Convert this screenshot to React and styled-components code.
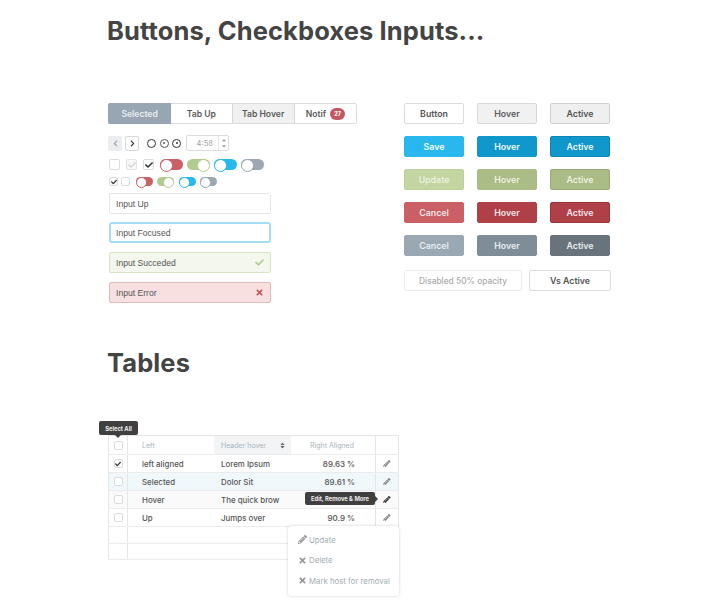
import React from "react";
import styled, { createGlobalStyle, css } from "styled-components";
import { FaPencilAlt, FaTimes, FaCheck, FaSort, FaChevronLeft, FaChevronRight, FaCaretUp, FaCaretDown } from "react-icons/fa";

const Global = createGlobalStyle`
  html, body { margin: 0; padding: 0; background: #fff; }
  body { font-family: "Inter", "Open Sans", sans-serif; color: #444; }
  * { box-sizing: border-box; }
`;

const Page = styled.div`
  width: 720px;
  height: 616px;
  padding: 14px 0 0 108px;
  overflow: hidden;
`;
const Title = styled.h1`
  margin: 0 0 0 -1px;
  font: 700 25.5px/34px "Inter", sans-serif;
  letter-spacing: 0.1px;
  color: #444;
`;
const Columns = styled.div`
  display: flex;
  margin-top: 55px;
  height: 243px;
`;
const Left = styled.div`
  width: 296px;
  display: flex;
  flex-direction: column;
`;
const Right = styled.div`
  display: flex;
  flex-direction: column;
  gap: 12px;
`;
const Tabs = styled.div`
  width: 249px;
  height: 21px;
  display: flex;
  border: 1px solid #dcdcdc;
  border-radius: 2px;
`;
const Tab = styled.div`
  flex: ${p => p.$w} 0 0;
  display: flex;
  align-items: center;
  justify-content: center;
  gap: 4px;
  font-size: 8.6px;
  font-weight: 600;
  color: #5a5a5a;
  ${p => p.$selected && css`background: #98a6b3; color: #e9edf0; margin: -1px 0 -1px -1px; border-radius: 2px 0 0 2px;`}
  ${p => p.$hover && css`background: #f1f1f1; border-left: 1px solid #d6d6d6; border-right: 1px solid #d6d6d6;`}
`;
const Badge = styled.span`
  width: 15px;
  height: 12px;
  border-radius: 6px;
  background: #c8565e;
  color: #fff;
  font-size: 5.5px;
  font-weight: 800;
  display: flex;
  align-items: center;
  justify-content: center;
`;
const Pager = styled.div`
  display: flex;
  align-items: center;
  height: 16px;
  margin-top: 11px;
`;
const PageBtn = styled.div`
  width: 14px;
  height: 15px;
  margin-right: 3px;
  border-radius: 2px;
  display: flex;
  align-items: center;
  justify-content: center;
  font-size: 7px;
  color: ${p => p.$off ? "#95a3b0" : "#333"};
  background: ${p => p.$off ? "#ebedef" : "#fff"};
  border: 1px solid ${p => p.$off ? "#ebedef" : "#d8d8d8"};
`;
const Radios = styled.div`
  display: flex;
  gap: 3.5px;
  margin: 0 5px 0 5px;
`;
const Radio = styled.span`
  width: 9px;
  height: 9px;
  border-radius: 50%;
  border: 1.5px solid ${p => p.$c};
  display: flex;
  align-items: center;
  justify-content: center;
  &::after {
    content: "";
    display: ${p => p.$dot ? "block" : "none"};
    width: 2px;
    height: 2px;
    border-radius: 50%;
    background: ${p => p.$c};
  }
`;
const Spinner = styled.div`
  width: 43px;
  height: 16px;
  display: flex;
  border: 1px solid #dcdcdc;
  border-radius: 2px;
`;
const SpinValue = styled.div`
  flex: 1;
  font-size: 7.6px;
  color: #a5a5a5;
  display: flex;
  align-items: center;
  justify-content: flex-end;
  padding-right: 5px;
`;
const SpinArrows = styled.div`
  width: 10px;
  border-left: 1px solid #e4e4e4;
  display: flex;
  flex-direction: column;
  align-items: center;
  justify-content: center;
  font-size: 6px;
  line-height: 6px;
  color: #999;
`;
const ControlRow = styled.div`
  display: flex;
  align-items: center;
  height: ${p => p.$h}px;
  margin: ${p => p.$mt}px 0 0 1px;
`;
const Box = styled.span`
  flex: none;
  width: ${p => p.$s}px;
  height: ${p => p.$s}px;
  margin-right: ${p => p.$mr}px;
  border: 1px solid ${p => p.$off ? "#e4e4e4" : "#dcdcdc"};
  border-radius: 2px;
  background: ${p => p.$off ? "#f8f8f8" : "#fff"};
  color: ${p => p.$off ? "#d6d6d6" : "#333"};
  display: flex;
  align-items: center;
  justify-content: center;
  font-size: ${p => p.$s - 3}px;
`;
const Toggle = styled.span`
  flex: none;
  width: ${p => p.$w}px;
  height: ${p => p.$h}px;
  margin-right: ${p => p.$mr}px;
  border-radius: ${p => p.$h / 2}px;
  background: ${p => p.$c};
  display: flex;
  justify-content: ${p => p.$right ? "flex-end" : "flex-start"};
  &::after {
    content: "";
    width: ${p => p.$h}px;
    height: ${p => p.$h}px;
    border-radius: 50%;
    background: #fff;
    border: 1px solid ${p => p.$c};
  }
`;
const Input = styled.div`
  width: 162px;
  height: 21px;
  margin: ${p => p.$mt}px 0 0 1px;
  padding: 0 6px;
  display: flex;
  align-items: center;
  justify-content: space-between;
  border-radius: 2px;
  font: 400 8.6px "Liberation Sans", Arial, sans-serif;
  color: #555;
  border: 1px solid #e6e6e6;
  ${p => p.$state === "focus" && css`border: 2px solid #a3def5; border-radius: 3px; padding: 0 5px;`}
  ${p => p.$state === "ok" && css`border-color: #d6e3c4; background: #f3f7ed; svg { color: #b6cd9a; }`}
  ${p => p.$state === "err" && css`border-color: #e5b8bb; background: #f8dfe0; svg { color: #c8565e; font-size: 11px; }`}
  svg { font-size: 9px; }
`;
const BtnRow = styled.div`
  display: flex;
  gap: ${p => p.$gap || 13}px;
  margin-top: ${p => p.$mt || 0}px;
`;
const palette = {
  plain: { bg: "#fff", bd: "#dcdcdc", fg: "#555" },
  plainH: { bg: "#f1f1f1", bd: "#d8d8d8", fg: "#5c5c5c" },
  plainA: { bg: "#efefef", bd: "#cfcfcf", fg: "#555" },
  blue: { bg: "#29b8ee", bd: "#29b8ee", fg: "#f2fbff" },
  blueH: { bg: "#1097cc", bd: "#1097cc", fg: "#eef9fd" },
  blueA: { bg: "#1097cc", bd: "#0e86b5", fg: "#eef9fd" },
  green: { bg: "#c3d5a1", bd: "#bcd09a", fg: "#eaf1dc" },
  greenH: { bg: "#abbc87", bd: "#abbc87", fg: "#ecf1df" },
  greenA: { bg: "#abbc87", bd: "#98a977", fg: "#ecf1df" },
  red: { bg: "#cb5f66", bd: "#cb5f66", fg: "#f8e4e5" },
  redH: { bg: "#b04048", bd: "#b04048", fg: "#f8e4e5" },
  redA: { bg: "#b04048", bd: "#9b353c", fg: "#f8e4e5" },
  gray: { bg: "#9aa8b3", bd: "#9aa8b3", fg: "#e7ecef" },
  grayH: { bg: "#7f8d99", bd: "#7f8d99", fg: "#e7ecef" },
  grayA: { bg: "#68737b", bd: "#68737b", fg: "#e7ecef" },
};
const Btn = styled.div`
  width: ${p => p.$w || 60}px;
  height: 21px;
  border-radius: 2px;
  display: flex;
  align-items: center;
  justify-content: center;
  font-size: 8.8px;
  font-weight: 600;
  background: ${p => palette[p.$k].bg};
  border: 1px solid ${p => palette[p.$k].bd};
  color: ${p => palette[p.$k].fg};
  ${p => p.$dim && css`opacity: .5; font-weight: 500; font-size: 8.4px;`}
`;
const TableWrap = styled.div`
  position: relative;
  width: 290px;
  margin-top: 55px;
`;
const Table = styled.table`
  width: 290px;
  table-layout: fixed;
  border-collapse: collapse;
  border: 1px solid #e6e6e6;
  font-size: 7.9px;
  color: #555;
  td, th { padding: 0; border-bottom: 1px solid #ececec; }
  td:first-child, th:first-child { border-right: 1px solid #e6e6e6; }
  td:nth-child(2), th:nth-child(2) { padding-left: 14px; }
  td:nth-child(3), th:nth-child(3) { padding-left: 7.5px; }
  td:last-child, th:last-child { border-left: 1px solid #e6e6e6; }
`;
const HeadRow = styled.tr`
  height: 19px;
  th { font-size: 7px; font-weight: 400; color: #a9b3bb; text-align: left; }
`;
const HoverHead = styled.th`
  background: #f3f4f5;
`;
const HeadInner = styled.div`
  display: flex;
  justify-content: space-between;
  align-items: center;
  padding-right: 5px;
  svg { color: #666; font-size: 7px; }
`;
const Row = styled.tr`
  height: ${p => p.$h || 18}px;
  font-weight: 500;
  background: ${p => p.$bg || "#fff"};
`;
const Num = styled.td`
  text-align: right;
  && { padding: 0 20px 0 0; }
  font-weight: 600;
  color: #666;
`;
const RightHead = styled.th`
  && { text-align: right; padding: 0 21px 0 0; }
`;
const CellCenter = styled.div`
  display: flex;
  justify-content: center;
  align-items: center;
`;
const Pencil = styled(FaPencilAlt)`
  font-size: 7.5px;
  color: ${p => p.$dark ? "#333" : "#888"};
`;
const TipBase = styled.div`
  position: absolute;
  background: #404040;
  color: #eee;
  border-radius: 2px;
  font-size: 5.8px;
  font-weight: 700;
  display: flex;
  align-items: center;
  justify-content: center;
  &::after { content: ""; position: absolute; border: 3px solid transparent; }
`;
const TipTop = styled(TipBase)`
  left: -9px;
  top: -14px;
  width: 39px;
  height: 14px;
  &::after { top: 100%; left: 16px; border-top-color: #404040; }
`;
const TipSide = styled(TipBase)`
  left: 197px;
  top: 57px;
  width: 70px;
  height: 13px;
  &::after { left: 100%; top: 4px; border-left-color: #404040; }
`;
const Menu = styled.div`
  position: absolute;
  left: 180px;
  top: 91px;
  width: 111px;
  height: 70px;
  background: #fff;
  border-radius: 3px;
  box-shadow: 0 0 3px rgba(0,0,0,.2);
  display: flex;
  flex-direction: column;
  justify-content: center;
  gap: 10.5px;
  padding: 0 0 2px 10px;
`;
const MenuItem = styled.div`
  display: flex;
  align-items: center;
  gap: 2px;
  height: 10px;
  font-size: 7.8px;
  color: #a4adb4;
  svg { font-size: 9px; color: #999; }
`;

const buttons = [
  [["plain", "Button"], ["plainH", "Hover"], ["plainA", "Active"]],
  [["blue", "Save"], ["blueH", "Hover"], ["blueA", "Active"]],
  [["green", "Update"], ["greenH", "Hover"], ["greenA", "Active"]],
  [["red", "Cancel"], ["redH", "Hover"], ["redA", "Active"]],
  [["gray", "Cancel"], ["grayH", "Hover"], ["grayA", "Active"]],
];
const toggles = [["#cb5f66", false], ["#b2cb8e", true], ["#29b8ee", false], ["#9aa8b3", false]];

export default function App() {
  return (
    <Page>
      <Global />
      <Title>Buttons, Checkboxes Inputs...</Title>
      <Columns>
        <Left>
          <Tabs>
            <Tab $w={64} $selected>Selected</Tab>
            <Tab $w={61}>Tab Up</Tab>
            <Tab $w={62} $hover>Tab Hover</Tab>
            <Tab $w={62}>Notif <Badge>27</Badge></Tab>
          </Tabs>
          <Pager>
            <PageBtn $off><FaChevronLeft /></PageBtn>
            <PageBtn><FaChevronRight /></PageBtn>
            <Radios>
              <Radio $c="#333" />
              <Radio $c="#555" $dot />
              <Radio $c="#333" $dot />
            </Radios>
            <Spinner>
              <SpinValue>4:58</SpinValue>
              <SpinArrows><FaCaretUp /><FaCaretDown /></SpinArrows>
            </Spinner>
          </Pager>
          <ControlRow $h={11} $mt={8}>
            <Box $s={11} $mr={6} />
            <Box $s={11} $mr={6} $off><FaCheck /></Box>
            <Box $s={11} $mr={6}><FaCheck /></Box>
            {toggles.map(([c, r], i) => <Toggle key={i} $w={23} $h={11} $mr={4} $c={c} $right={r} />)}
          </ControlRow>
          <ControlRow $h={9} $mt={7}>
            <Box $s={9} $mr={3}><FaCheck /></Box>
            <Box $s={9} $mr={6} />
            {toggles.map(([c, r], i) => <Toggle key={i} $w={17} $h={9} $mr={i === 1 ? 5 : 4} $c={c} $right={r} />)}
          </ControlRow>
          <Input $mt={7}>Input Up</Input>
          <Input $mt={8} $state="focus">Input Focused</Input>
          <Input $mt={9} $state="ok">Input Succeded<FaCheck /></Input>
          <Input $mt={9} $state="err">Input Error<FaTimes /></Input>
        </Left>
        <Right>
          {buttons.map((row, i) => (
            <BtnRow key={i}>
              {row.map(([k, t]) => <Btn key={t} $k={k}>{t}</Btn>)}
            </BtnRow>
          ))}
          <BtnRow $gap={7} $mt={2}>
            <Btn $k="plain" $w={118} $dim>Disabled 50% opacity</Btn>
            <Btn $k="plain" $w={82}>Vs Active</Btn>
          </BtnRow>
        </Right>
      </Columns>
      <Title as="h2">Tables</Title>
      <TableWrap>
        <TipTop>Select All</TipTop>
        <TipSide>Edit, Remove &amp; More</TipSide>
        <Table>
          <colgroup>
            <col style={{ width: 19 }} />
            <col style={{ width: 86 }} />
            <col style={{ width: 77 }} />
            <col style={{ width: 85 }} />
            <col style={{ width: 23 }} />
          </colgroup>
          <thead>
            <HeadRow>
              <th><CellCenter><Box $s={9} $mr={0} /></CellCenter></th>
              <th>Left</th>
              <HoverHead><HeadInner>Header hover <FaSort /></HeadInner></HoverHead>
              <RightHead>Right Aligned</RightHead>
              <th />
            </HeadRow>
          </thead>
          <tbody>
            {[
              ["left aligned", "Lorem Ipsum", "89.63 %", true, "#fff", false],
              ["Selected", "Dolor Sit", "89.61 %", false, "#f1f8fc", false],
              ["Hover", "The quick brow", "", false, "#fafafa", true],
              ["Up", "Jumps over", "90.9 %", false, "#fff", false],
            ].map(([a, b, n, checked, bg, dark]) => (
              <Row key={a} $bg={bg}>
                <td><CellCenter><Box $s={9} $mr={0}>{checked && <FaCheck />}</Box></CellCenter></td>
                <td>{a}</td>
                <td>{b}</td>
                <Num>{n}</Num>
                <td><CellCenter><Pencil $dark={dark} /></CellCenter></td>
              </Row>
            ))}
            <Row $h={17}><td /><td /><td /><td /><td /></Row>
            <Row $h={16}><td /><td /><td /><td /><td /></Row>
          </tbody>
        </Table>
        <Menu>
          <MenuItem><FaPencilAlt /> Update</MenuItem>
          <MenuItem><FaTimes /> Delete</MenuItem>
          <MenuItem><FaTimes /> Mark host for removal</MenuItem>
        </Menu>
      </TableWrap>
    </Page>
  );
}
